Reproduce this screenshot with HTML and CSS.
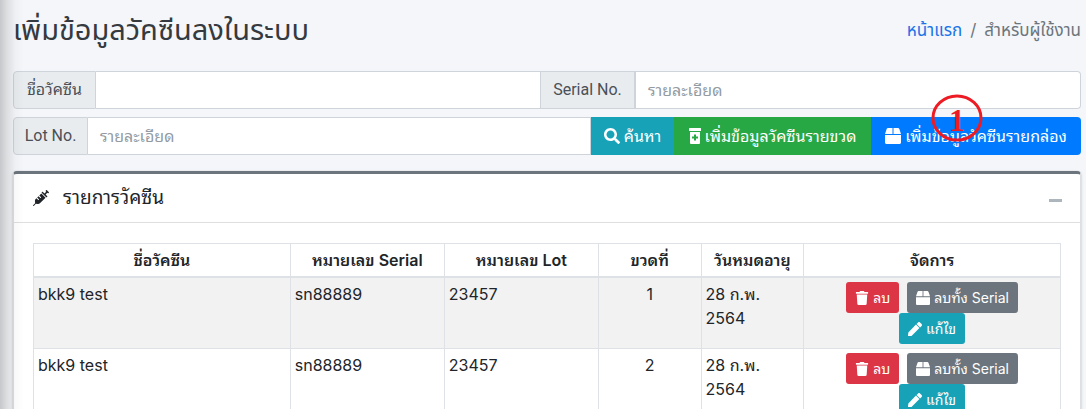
FILE: index.html
```html
<!DOCTYPE html>
<html lang="th">
<head>
<meta charset="utf-8">
<meta name="viewport" content="width=device-width, initial-scale=1">
<title>เพิ่มข้อมูลวัคซีนลงในระบบ</title>
<link rel="stylesheet" href="styles.css">
</head>
<body>
<svg class="sprite" aria-hidden="true">
  <symbol id="i-search" viewBox="0 0 512 512"><path d="M505 442.700 405.300 343c-4.500-4.500-10.600-7-17-7H372c27.600-35.300 44-79.700 44-128C416 93.100 322.900 0 208 0S0 93.100 0 208s93.100 208 208 208c48.300 0 92.700-16.400 128-44v16.300c0 6.400 2.500 12.500 7 17l99.700 99.700c9.400 9.400 24.600 9.400 33.900 0l28.300-28.300c9.400-9.400 9.400-24.600.1-34zM208 336c-70.700 0-128-57.200-128-128 0-70.700 57.200-128 128-128 70.700 0 128 57.200 128 128 0 70.700-57.200 128-128 128z"/></symbol>
  <symbol id="i-bottle" viewBox="0 0 384 512"><path fill-rule="evenodd" d="M16 0h352q16 0 16 16v64q0 16-16 16H16Q0 96 0 80V16Q0 0 16 0zM32 128h320v352q0 32-32 32H64q-32 0-32-32zM160 208v64H96v64h64v64h64v-64h64v-64h-64v-64z"/></symbol>
  <symbol id="i-box" viewBox="0 0 512 512"><path d="M509.500 184.600 458.900 32.800C452.400 13.200 434.100 0 413.400 0H272v192h238.700c-.4-2.500-.4-5-1.200-7.400zM240 0H98.600c-20.700 0-39 13.200-45.500 32.800L2.500 184.600c-.8 2.400-.8 4.900-1.200 7.400H240zM0 224v240c0 26.500 21.500 48 48 48h416c26.500 0 48-21.500 48-48V224z"/></symbol>
  <symbol id="i-trash" viewBox="0 0 448 512"><path d="M432 32H312l-9.400-18.700A24 24 0 0 0 281.100 0H166.800a24 24 0 0 0-21.400 13.300L136 32H16A16 16 0 0 0 0 48v32a16 16 0 0 0 16 16h416a16 16 0 0 0 16-16V48a16 16 0 0 0-16-16zM53.200 467a48 48 0 0 0 47.900 45h245.800a48 48 0 0 0 47.900-45L416 128H32z"/></symbol>
  <symbol id="i-pen" viewBox="0 0 512 512"><path d="M290.700 93.200 418.800 221.300 128 512 14.100 511.900C5.500 512.900-1.700 505.600 0 497L12.800 383zM497.900 74.200 437.800 14.100c-18.800-18.800-49.200-18.800-67.900 0l-56.600 56.600 128 128 56.600-56.600c18.800-18.800 18.800-49.200 0-67.900z"/></symbol>
  <symbol id="i-syringe" viewBox="0 0 512 512"><path d="M201.500 174.800l55.700 55.800c3.100 3.100 3.100 8.200 0 11.300l-11.300 11.300c-3.100 3.100-8.200 3.100-11.300 0l-55.700-55.800-45.300 45.300 55.800 55.800c3.100 3.100 3.100 8.200 0 11.300l-11.300 11.300c-3.100 3.100-8.200 3.100-11.300 0L111 265.200l-26.400 26.400c-17.300 17.300-25.600 41.100-23 65.400l7.100 63.600L2.300 487c-3.100 3.100-3.100 8.200 0 11.300l11.300 11.300c3.100 3.100 8.200 3.100 11.300 0l66.300-66.300 63.600 7.100c23.900 2.600 47.900-5.400 65.400-23l181.900-181.900-135.700-135.700zM509.700 72.900 439.100 2.300c-3.100-3.100-8.200-3.100-11.300 0l-22.600 22.600c-3.100 3.100-3.100 8.200 0 11.300l17.400 17.400-56.500 56.500-55.600-55.600c-3.100-3.100-8.200-3.100-11.300 0l-22.600 22.600c-3.100 3.100-3.100 8.200 0 11.300l147.300 147.300c3.100 3.100 8.200 3.100 11.300 0l22.600-22.600c3.100-3.100 3.100-8.200 0-11.300l-55.600-55.600 56.500-56.500 17.400 17.400c3.100 3.100 8.200 3.100 11.300 0l22.600-22.600c3-3.100 3-8.200-.3-11.600z"/></symbol>
</svg>

<main class="page">
  <header class="page-head">
    <h1 class="title">เพิ่มข้อมูลวัคซีนลงในระบบ</h1>
    <nav class="crumbs" aria-label="breadcrumb">
      <a href="#">หน้าแรก</a><span>/</span><span>สำหรับผู้ใช้งาน</span>
    </nav>
  </header>

  <form class="search">
    <div class="group">
      <label class="addon addon-name" for="name">ชื่อวัคซีน</label>
      <input class="field" id="name" type="text">
      <label class="addon addon-serial" for="serial">Serial No.</label>
      <input class="field" id="serial" type="text" placeholder="รายละเอียด">
    </div>
    <div class="group">
      <label class="addon addon-lot" for="lot">Lot No.</label>
      <input class="field" id="lot" type="text" placeholder="รายละเอียด">
      <button class="btn info btn-find" type="button"><svg class="icon"><use href="#i-search"/></svg>ค้นหา</button>
      <button class="btn success btn-bottle" type="button"><svg class="icon narrow"><use href="#i-bottle"/></svg>เพิ่มข้อมูลวัคซีนรายขวด</button>
      <button class="btn primary btn-box" type="button"><svg class="icon"><use href="#i-box"/></svg>เพิ่มข้อมูลวัคซีนรายกล่อง<span class="step"><svg class="step-ring" viewBox="0 0 52 48"><ellipse cx="26" cy="24" rx="24" ry="22"/></svg><span class="step-num">1</span></span></button>
    </div>
  </form>

  <section class="card">
    <div class="card-head">
      <svg class="icon"><use href="#i-syringe"/></svg>
      <h2 class="card-title">รายการวัคซีน</h2>
      <button class="collapse" type="button" aria-label="ย่อ"><span class="dash"></span></button>
    </div>
    <div class="card-body">
      <table class="table">
        <colgroup><col class="w25"><col class="w15"><col class="w15"><col class="w10"><col class="w10"><col class="w25"></colgroup>
        <thead>
          <tr><th>ชื่อวัคซีน</th><th>หมายเลข Serial</th><th>หมายเลข Lot</th><th>ขวดที่</th><th>วันหมดอายุ</th><th>จัดการ</th></tr>
        </thead>
        <tbody>
          <tr>
            <td>bkk9 test</td><td>sn88889</td><td>23457</td><td class="center">1</td><td>28 ก.พ. 2564</td>
            <td><div class="actions">
              <button class="btn small danger" type="button"><svg class="icon"><use href="#i-trash"/></svg>ลบ</button>
              <button class="btn small secondary" type="button"><svg class="icon"><use href="#i-box"/></svg>ลบทั้ง Serial</button>
              <button class="btn small info" type="button"><svg class="icon"><use href="#i-pen"/></svg>แก้ไข</button>
            </div></td>
          </tr>
          <tr>
            <td>bkk9 test</td><td>sn88889</td><td>23457</td><td class="center">2</td><td>28 ก.พ. 2564</td>
            <td><div class="actions">
              <button class="btn small danger" type="button"><svg class="icon"><use href="#i-trash"/></svg>ลบ</button>
              <button class="btn small secondary" type="button"><svg class="icon"><use href="#i-box"/></svg>ลบทั้ง Serial</button>
              <button class="btn small info" type="button"><svg class="icon"><use href="#i-pen"/></svg>แก้ไข</button>
            </div></td>
          </tr>
        </tbody>
      </table>
    </div>
  </section>
</main>
<div class="edge-shadow"></div>
</body>
</html>
```

FILE: styles.css
```css
* { box-sizing: border-box; }

html { overflow: hidden; }

body {
  margin: 0;
  background: #f4f6f9;
  color: #212529;
  font: 400 16px/24px Inter, "Noto Sans Thai Looped", "Noto Looped Thai", Loma, Garuda, Waree, "Noto Sans Thai", "Noto Sans", sans-serif;
}

button, input { font: inherit; }

.sprite { display: none; }

.page { padding: 12px 5px 16px 13px; }

.page-head {
  display: flex;
  justify-content: space-between;
  align-items: center;
  height: 36px;
  margin-bottom: 23px;
  font-family: Inter, "Noto Sans Thai", "Noto Sans", sans-serif;
}

.title { margin: 0; color: #343a40; font-size: 29px; font-weight: 400; line-height: 36px; }

.crumbs { display: flex; gap: 8px; color: #6c757d; font-size: 17px; }
.crumbs a { color: #1a73e8; text-decoration: none; }

.search { display: flex; flex-direction: column; gap: 8px; margin-bottom: 16px; }

.group { display: flex; height: 38px; }
.group > :first-child { border-radius: 4px 0 0 4px; }
.group > :last-child { border-radius: 0 4px 4px 0; }

.addon {
  display: flex;
  flex: none;
  align-items: center;
  justify-content: center;
  border: 1px solid #ced4da;
  background: #e9ecef;
  color: #495057;
  font-family: Roboto, "Noto Sans Thai Looped", "Noto Sans Thai", "Noto Sans", sans-serif;
  white-space: nowrap;
}
.addon-name { width: 83px; }
.addon-serial { width: 95px; border-left: 0; border-right-width: 2px; }
.addon-lot { width: 75px; }

.field {
  flex: 1;
  min-width: 0;
  padding: 6px 12px;
  border: 1px solid #ced4da;
  border-left: 0;
  border-radius: 0;
  background: #fff;
  color: #495057;
}
.field::placeholder { color: #939ba2; opacity: 1; }

.btn {
  position: relative;
  display: flex;
  flex: none;
  align-items: center;
  justify-content: center;
  gap: 4px;
  padding: 0;
  border: 0;
  color: #fff;
  white-space: nowrap;
}
.btn-find { width: 83px; }
.btn-bottle { width: 197px; }
.btn-box { width: 210px; }

.info { background: #17a2b8; }
.success { background: #28a745; }
.primary { background: #007bff; }
.danger { background: #dc3545; }
.secondary { background: #6c757d; }

.icon { width: 16px; height: 16px; flex: none; fill: currentColor; }
.narrow { width: 12px; }

.step { position: absolute; left: 60px; top: -23px; width: 52px; height: 48px; }
.step-ring { display: block; width: 52px; height: 48px; fill: none; stroke: #ed1c24; stroke-width: 3; }
.step-num {
  position: absolute;
  inset: 0;
  color: #ed1c24;
  font: 700 32px/52px "Liberation Serif", serif;
  text-align: center;
}

.card {
  border: 1px solid #dcdfe3;
  border-top: 3px solid #6c757d;
  border-radius: 4px;
  background: #fff;
  box-shadow: 0 0 1px #00000020, 0 1px 3px #00000033;
}

.card-head {
  display: flex;
  align-items: center;
  height: 49px;
  padding: 0 18px 0 19px;
  border-bottom: 1px solid #dfdfdf;
}
.card-title { flex: 1; margin: 0 0 0 14px; font-size: 19px; font-weight: 400; }

.collapse { padding: 4px 0 0; border: 0; background: none; }
.dash { display: block; width: 13px; height: 3px; background: #adb5bd; }

.card-body { padding: 20px 19px; }

.table { width: 100%; table-layout: fixed; border-collapse: collapse; }
.w25 { width: 25%; }
.w15 { width: 15%; }
.w10 { width: 10%; }

.table th, .table td { padding: 4px; border: 1px solid #dee2e6; vertical-align: top; text-align: left; }
.table th { border-bottom-width: 2px; font-weight: 600; text-align: center; white-space: nowrap; }
.table .center { text-align: center; }
.table tbody tr:nth-child(odd) { background: #f2f2f2; }

.actions { display: flex; flex-wrap: wrap; justify-content: center; column-gap: 8px; max-width: 180px; margin: 0 auto; }

.small { height: 31px; padding: 0 9px; border-radius: 3px; font-size: 14px; }
.small .icon { width: 14px; height: 14px; }

.edge-shadow {
  position: fixed;
  inset: 0 auto 0 0;
  width: 24px;
  background: linear-gradient(90deg, #00000030, #00000018 30%, #00000006 65%, transparent);
  pointer-events: none;
}
```
